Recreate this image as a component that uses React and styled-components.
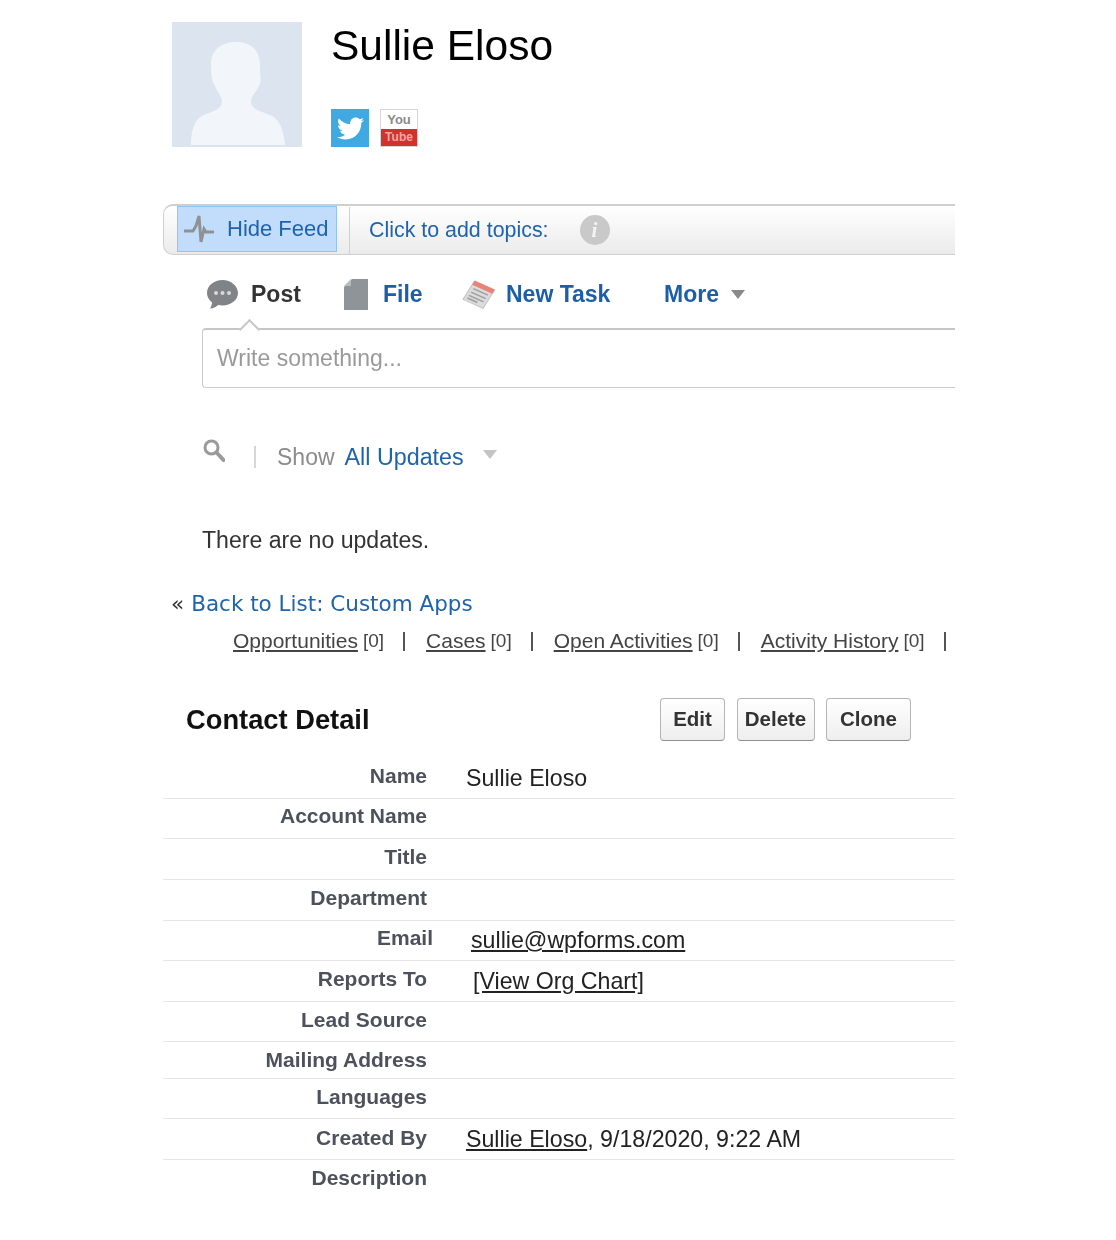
import React from "react";
import styled, { createGlobalStyle } from "styled-components";
import { FaTwitter } from "react-icons/fa";

const GlobalStyle = createGlobalStyle`
  html, body {
    margin: 0;
    padding: 0;
    background: #fff;
  }
  body {
    font-family: "Liberation Sans", Arial, sans-serif;
  }
`;

const Page = styled.div`
  width: 792px;
  height: 1240px;
  margin-left: 163px;
  overflow: hidden;
  filter: blur(0.55px);
`;

const Header = styled.header`
  display: flex;
  padding: 22px 0 0 9px;
  height: 204px;
  box-sizing: border-box;
`;

const Avatar = styled.svg`
  width: 130px;
  height: 125px;
  flex: none;
`;

const NameBlock = styled.div`
  margin-left: 29px;
`;

const Name = styled.h1`
  margin: 0;
  height: 87px;
  font-size: 42.5px;
  line-height: 48px;
  font-weight: 400;
  color: #000;
`;

const Socials = styled.div`
  display: flex;
  gap: 11px;
`;

const TwitterTile = styled.div`
  width: 38px;
  height: 38px;
  display: flex;
  align-items: center;
  justify-content: center;
  background: #41a9e1;
  color: #fff;
  font-size: 27px;
`;

const YoutubeTile = styled.div`
  width: 38px;
  height: 38px;
  display: flex;
  flex-direction: column;
  box-sizing: border-box;
  border: 1px solid #d6d6d6;
  text-align: center;
  font-size: 13px;
  font-weight: 700;
  overflow: hidden;
`;

const YouPart = styled.div`
  height: 19px;
  line-height: 20px;
  color: #8b8b8b;
  background: #fff;
`;

const TubePart = styled.div`
  flex: 1;
  line-height: 17px;
  color: #efa9a0;
  background: #d2322d;
  font-size: 12px;
`;

const FeedBar = styled.div`
  display: flex;
  align-items: center;
  height: 51px;
  box-sizing: border-box;
  padding-left: 13px;
  border: 1px solid #cfcfcf;
  border-top-width: 2px;
  border-right: none;
  border-radius: 10px 0 0 10px;
  background: linear-gradient(#ffffff, #ebebeb);
`;

const HideFeed = styled.div`
  display: flex;
  align-items: center;
  width: 160px;
  height: 46px;
  margin-bottom: 2px;
  box-sizing: border-box;
  padding-left: 6px;
  gap: 13px;
  border: 1px solid #8fc5f6;
  background: #c2ddfb;
  color: #1f63ad;
  font-size: 22px;
`;

const BarDivider = styled.div`
  width: 1px;
  height: 47px;
  margin: 0 19px 0 12px;
  background: #cfcfcf;
`;

const TopicsLink = styled.span`
  color: #1f63ad;
  font-size: 21.4px;
`;

const InfoDot = styled.span`
  display: flex;
  align-items: center;
  justify-content: center;
  width: 30px;
  height: 30px;
  margin-left: 31px;
  border-radius: 50%;
  background: #c9c9c9;
  color: #f4f4f4;
  font: italic 700 21px "Liberation Serif", serif;
`;

const Publisher = styled.div`
  display: flex;
  align-items: center;
  height: 73px;
  padding: 5px 0 0 44px;
  box-sizing: border-box;
`;

const PublisherTab = styled.div`
  display: flex;
  align-items: center;
  gap: ${(props) => props.$gap || 13}px;
  width: ${(props) => props.$width}px;
  font-size: 23px;
  font-weight: 700;
  color: ${(props) => (props.$active ? "#333" : "#1c5fa8")};
`;

const Caret = styled.span`
  width: 0;
  height: 0;
  border-left: 7px solid transparent;
  border-right: 7px solid transparent;
  border-top: 9px solid ${(props) => props.$color || "#8a8a8a"};
`;

const Composer = styled.div`
  position: relative;
  display: flex;
  align-items: center;
  height: 60px;
  margin-left: 39px;
  box-sizing: border-box;
  padding-left: 14px;
  border: 1px solid #c9cdd1;
  border-top: 2px solid #c4c6c8;
  border-right: none;
  border-radius: 4px 0 0 4px;
  color: #9a9a9a;
  font-size: 23px;

  &::before {
    content: "";
    position: absolute;
    left: 39px;
    top: -8px;
    width: 13px;
    height: 13px;
    background: #fff;
    border-top: 2px solid #c4c6c8;
    border-left: 2px solid #c4c6c8;
    transform: rotate(45deg);
  }
`;

const FilterRow = styled.div`
  display: flex;
  align-items: center;
  height: 46px;
  margin-top: 43px;
  padding-left: 40px;
`;

const SearchGlyph = styled.svg`
  margin-bottom: 8px;
`;

const FilterDivider = styled.span`
  width: 2px;
  height: 22px;
  margin: 6px 20px 0 29px;
  background: #d6d6d6;
`;

const ShowLabel = styled.span`
  margin: 6px 0 0 1px;
  color: #8b8b8b;
  font-size: 23px;
`;

const ShowValue = styled.span`
  margin: 6px 19px 0 10px;
  color: #1f63ad;
  font-size: 23.3px;
`;

const Empty = styled.p`
  margin: 48px 0 0 39px;
  height: 30px;
  line-height: 30px;
  color: #333;
  font-size: 23.1px;
`;

const BackRow = styled.div`
  margin: 34px 0 0 8px;
  height: 30px;
  line-height: 30px;
  color: #333;
  font-family: "DejaVu Sans", sans-serif;
  font-size: 21.5px;
`;

const BackLink = styled.span`
  margin-left: 7px;
  color: #1f63ad;
`;

const RelatedRow = styled.div`
  display: flex;
  align-items: center;
  height: 30px;
  margin: 7px 0 0 70px;
  color: #444;
  font-size: 21px;
  white-space: nowrap;
`;

const RelatedLink = styled.span`
  text-decoration: underline;
`;

const Count = styled.span`
  margin-left: 5px;
  font-size: 19px;
`;

const Pipe = styled.span`
  flex: none;
  width: 2px;
  height: 19px;
  margin: 0 21px 0 19px;
  background: #555;
`;

const DetailHeader = styled.div`
  display: flex;
  align-items: center;
  height: 44px;
  margin-top: 41px;
  padding-left: 23px;
`;

const DetailTitle = styled.h2`
  margin: 2px 0 0;
  width: 474px;
  color: #111;
  font-size: 27.3px;
  font-weight: 700;
`;

const Buttons = styled.div`
  display: flex;
  gap: 11.5px;
`;

const Button = styled.div`
  display: flex;
  align-items: center;
  justify-content: center;
  width: ${(props) => props.$width}px;
  height: 43px;
  box-sizing: border-box;
  border: 1px solid #b5b5b5;
  border-bottom-color: #8f8f8f;
  border-radius: 4px;
  background: linear-gradient(#ffffff, #eeeeee);
  color: #333;
  font-size: 20.5px;
  font-weight: 700;
`;

const Table = styled.div`
  margin-top: 17px;
`;

const Row = styled.div`
  display: flex;
  align-items: flex-end;
  height: ${(props) => props.$height}px;
  box-sizing: border-box;
  padding-bottom: ${(props) => props.$pad || 8}px;
  border-bottom: ${(props) => (props.$last ? "none" : "1px solid #e6e6e6")};
`;

const Label = styled.div`
  width: ${(props) => 264 + (props.$shift || 0)}px;
  flex: none;
  margin-bottom: 2px;
  text-align: right;
  line-height: 24px;
  color: #4d515c;
  font-size: 21px;
  font-weight: 700;
`;

const Value = styled.div`
  margin: 0 0 ${(props) => props.$drop ?? -1}px ${(props) => props.$left || 39}px;
  line-height: 26px;
  color: #222;
  font-size: 23.2px;
`;

const ValueLink = styled.span`
  text-decoration: underline;
`;

const rows = [
  { label: "Name", height: 41, value: "Sullie Eloso" },
  { label: "Account Name", height: 40 },
  { label: "Title", height: 41 },
  { label: "Department", height: 41 },
  { label: "Email", height: 40, shift: 6, left: 38, link: "sullie@wpforms.com" },
  { label: "Reports To", height: 41, left: 46, link: "[View Org Chart]" },
  { label: "Lead Source", height: 40, pad: 7 },
  { label: "Mailing Address", height: 37, pad: 4 },
  { label: "Languages", height: 40, pad: 7 },
  { label: "Created By", height: 41, pad: 7, drop: 0, link: "Sullie Eloso", value: ", 9/18/2020, 9:22 AM" },
  { label: "Description", height: 40, last: true },
];

const PulseIcon = () => (
  <svg width="30" height="28" viewBox="0 0 30 28" fill="none" stroke="#8f9294" strokeWidth="3">
    <path d="M0 16h9l3-5 3-10 2 26 3-13 2 3h8" />
  </svg>
);

const BubbleIcon = () => (
  <svg width="31" height="30" viewBox="0 0 31 30">
    <path d="M15.5 1C7 1 0 6.5 0 14c0 4 2 7 5 9.5 0 2-1 4.5-2 6 3 0 6-1.5 8-3.5 1.5.3 3 .4 4.5.4C24 26.4 31 21 31 14S24 1 15.5 1z" fill="#808488" />
    <circle cx="9" cy="14" r="2" fill="#d8d8d8" />
    <circle cx="15.5" cy="14" r="2" fill="#d8d8d8" />
    <circle cx="22" cy="14" r="2" fill="#d8d8d8" />
  </svg>
);

const FileIcon = () => (
  <svg width="24" height="31" viewBox="0 0 24 31">
    <path d="M8 0h16v31H0V8z" fill="#8f9499" />
    <path d="M7 0v7H0z" fill="#b9bcbf" />
  </svg>
);

const TaskIcon = () => (
  <svg width="33" height="29" viewBox="0 0 33 29">
    <g transform="rotate(24 16 14) skewX(-8)">
      <rect x="8" y="4" width="22" height="21" fill="#dcdcdc" stroke="#c2c2c2" />
      <rect x="8" y="3" width="22" height="5" fill="#e8857a" />
      <path d="M11 11h16M11 15h16M11 19h16M11 22h11" stroke="#a0a0a0" strokeWidth="1.5" />
    </g>
  </svg>
);

const SearchIcon = () => (
  <SearchGlyph width="22" height="23" viewBox="0 0 22 23" fill="none" stroke="#9a9a9a">
    <circle cx="8.5" cy="8.5" r="6.5" strokeWidth="3" />
    <path d="M13.5 13.5l7 7.5" strokeWidth="4" strokeLinecap="round" />
  </SearchGlyph>
);

export default function App() {
  return (
    <Page>
      <GlobalStyle />
      <Header>
        <Avatar viewBox="0 0 130 125">
          <rect width="130" height="125" fill="#dce5ef" />
          <path
            d="M64 20C50 20 39 28 39 42c0 10 1 18 4 22 2 6 7 10 7 16 0 8-12 10-20 14-8 4-11 16-11 29h94c-1-13-5-25-13-29-8-4-21-6-21-14 0-6 5-10 7-14 3-4 3-10 2-16 1-10 0-30-24-30z"
            fill="#f2f6fa"
          />
        </Avatar>
        <NameBlock>
          <Name>Sullie Eloso</Name>
          <Socials>
            <TwitterTile>
              <FaTwitter />
            </TwitterTile>
            <YoutubeTile>
              <YouPart>You</YouPart>
              <TubePart>Tube</TubePart>
            </YoutubeTile>
          </Socials>
        </NameBlock>
      </Header>

      <FeedBar>
        <HideFeed>
          <PulseIcon />
          Hide Feed
        </HideFeed>
        <BarDivider />
        <TopicsLink>Click to add topics:</TopicsLink>
        <InfoDot>i</InfoDot>
      </FeedBar>

      <Publisher>
        <PublisherTab $active $width={137}>
          <BubbleIcon />
          Post
        </PublisherTab>
        <PublisherTab $width={118} $gap={15}>
          <FileIcon />
          File
        </PublisherTab>
        <PublisherTab $width={202} $gap={11}>
          <TaskIcon />
          New Task
        </PublisherTab>
        <PublisherTab $gap={12}>
          More
          <Caret />
        </PublisherTab>
      </Publisher>

      <Composer>Write something...</Composer>

      <FilterRow>
        <SearchIcon />
        <FilterDivider />
        <ShowLabel>Show</ShowLabel>
        <ShowValue>All Updates</ShowValue>
        <Caret $color="#c4c4c4" />
      </FilterRow>

      <Empty>There are no updates.</Empty>

      <BackRow>
        «<BackLink>Back to List: Custom Apps</BackLink>
      </BackRow>

      <RelatedRow>
        <RelatedLink>Opportunities</RelatedLink>
        <Count>[0]</Count>
        <Pipe />
        <RelatedLink>Cases</RelatedLink>
        <Count>[0]</Count>
        <Pipe />
        <RelatedLink>Open Activities</RelatedLink>
        <Count>[0]</Count>
        <Pipe />
        <RelatedLink>Activity History</RelatedLink>
        <Count>[0]</Count>
        <Pipe />
      </RelatedRow>

      <DetailHeader>
        <DetailTitle>Contact Detail</DetailTitle>
        <Buttons>
          <Button $width={65}>Edit</Button>
          <Button $width={78}>Delete</Button>
          <Button $width={85}>Clone</Button>
        </Buttons>
      </DetailHeader>

      <Table>
        {rows.map((row) => (
          <Row key={row.label} $height={row.height} $pad={row.pad} $last={row.last}>
            <Label $shift={row.shift}>{row.label}</Label>
            <Value $left={row.left} $drop={row.drop}>
              {row.link && <ValueLink>{row.link}</ValueLink>}
              {row.value}
            </Value>
          </Row>
        ))}
      </Table>
    </Page>
  );
}
